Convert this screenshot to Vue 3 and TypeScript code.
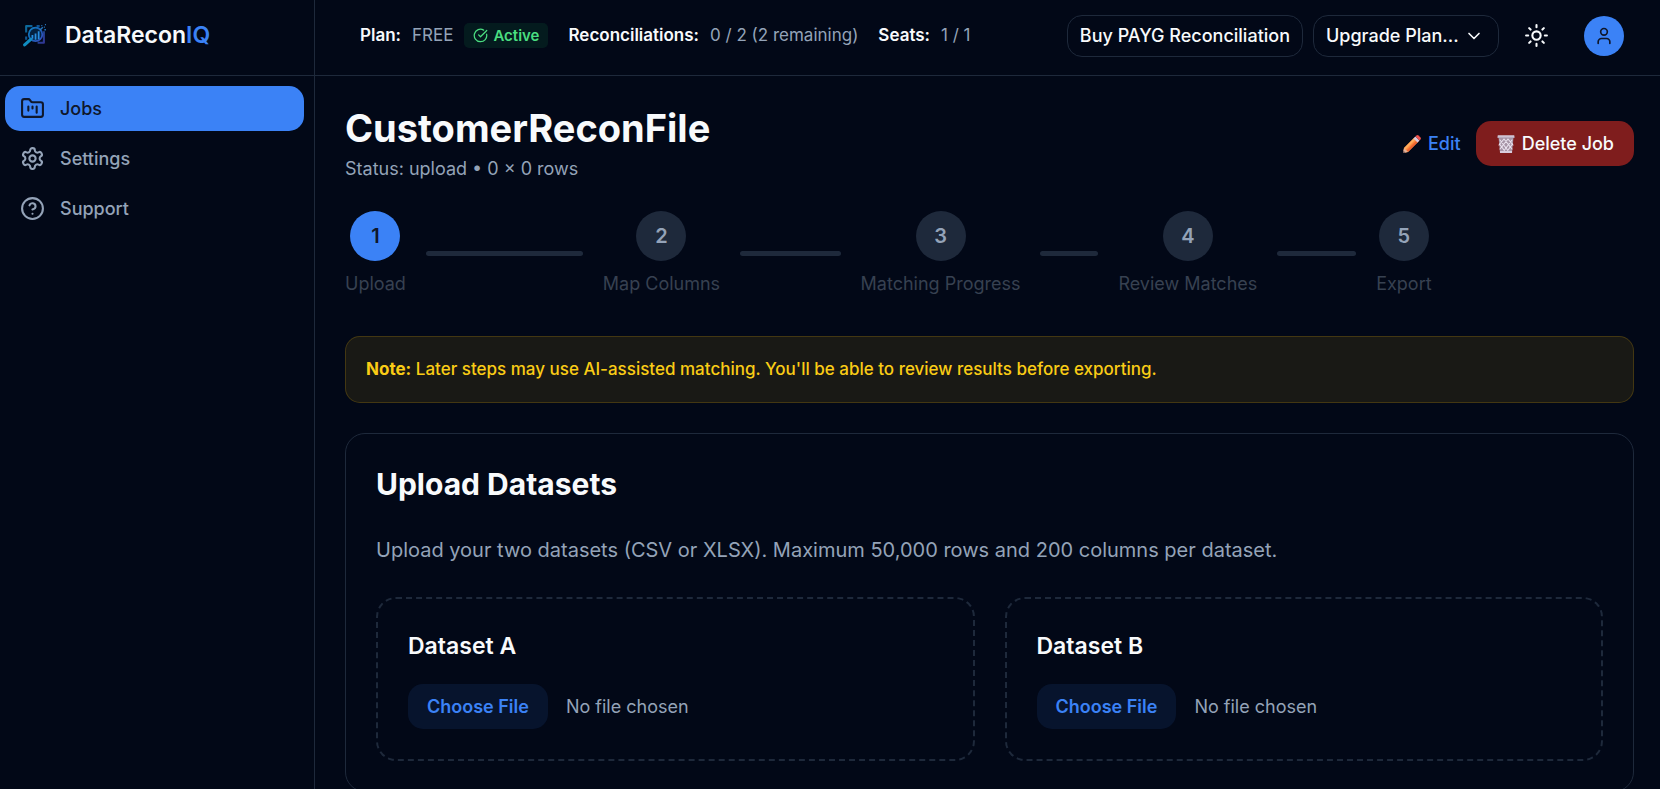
<script setup lang="ts">
import { ref } from 'vue'

interface Step { n: number; label: string }
interface Dataset { id: string; name: string }

const steps: Step[] = [
  { n: 1, label: 'Upload' },
  { n: 2, label: 'Map Columns' },
  { n: 3, label: 'Matching Progress' },
  { n: 4, label: 'Review Matches' },
  { n: 5, label: 'Export' },
]
const current = ref(1)
const plan = ref('')
const datasets: Dataset[] = [
  { id: 'dataset-a', name: 'Dataset A' },
  { id: 'dataset-b', name: 'Dataset B' },
]
</script>

<template>
  <div class="layout">
    <aside class="sidebar">
      <a class="brand" href="#">
        <svg class="logo" viewBox="0 0 24 24" fill="none">
          <defs>
            <linearGradient id="lg" x1="0" y1="0" x2="24" y2="20" gradientUnits="userSpaceOnUse">
              <stop offset="0" stop-color="#0e9fd0" />
              <stop offset="0.5" stop-color="#1565b8" />
              <stop offset="1" stop-color="#4c3fc0" />
            </linearGradient>
          </defs>
          <path d="M4 9V3h6M14 3h3M4 13v3M21 8v11h-6" stroke="url(#lg)" stroke-width="2" opacity="0.75" />
          <circle cx="13" cy="11" r="6.5" fill="#04213f" stroke="url(#lg)" stroke-width="1.7" />
          <path d="M8.400 15.700 2.500 21" stroke="#108cc0" stroke-width="3" stroke-linecap="round" />
          <path d="M10 11.500V15M13 10v6M16 8v7.500" stroke="#288fe0" stroke-width="1.700" />
          <path d="M17 7l3-3M21 4h1M22 1.500h1M18.500 2.500h1M21.500 6.500h1.500" stroke="#2877bd" stroke-width="1.300" />
        </svg>
        <span>DataRecon<span class="accent">IQ</span></span>
      </a>
      <nav class="nav">
        <a class="nav-item active" href="#">
          <svg class="icon" viewBox="0 0 24 24"><path d="M4 20h16a2 2 0 0 0 2-2V8a2 2 0 0 0-2-2h-7.930a2 2 0 0 1-1.660-.9l-.82-1.200A2 2 0 0 0 7.930 3H4a2 2 0 0 0-2 2v13c0 1.100.9 2 2 2ZM8 10v4M12 10v2M16 10v6" /></svg>
          Jobs
        </a>
        <a class="nav-item" href="#">
          <svg class="icon" viewBox="0 0 24 24"><path d="M12.220 2h-.44a2 2 0 0 0-2 2v.18a2 2 0 0 1-1 1.730l-.43.25a2 2 0 0 1-2 0l-.15-.08a2 2 0 0 0-2.730.73l-.22.38a2 2 0 0 0 .73 2.730l.15.1a2 2 0 0 1 1 1.720v.51a2 2 0 0 1-1 1.740l-.15.09a2 2 0 0 0-.73 2.730l.22.38a2 2 0 0 0 2.730.73l.15-.08a2 2 0 0 1 2 0l.43.25a2 2 0 0 1 1 1.730V20a2 2 0 0 0 2 2h.44a2 2 0 0 0 2-2v-.18a2 2 0 0 1 1-1.730l.43-.25a2 2 0 0 1 2 0l.15.08a2 2 0 0 0 2.730-.73l.22-.39a2 2 0 0 0-.73-2.730l-.15-.08a2 2 0 0 1-1-1.740v-.5a2 2 0 0 1 1-1.740l.15-.09a2 2 0 0 0 .73-2.730l-.22-.38a2 2 0 0 0-2.730-.73l-.15.08a2 2 0 0 1-2 0l-.43-.25a2 2 0 0 1-1-1.730V4a2 2 0 0 0-2-2z" /><circle cx="12" cy="12" r="3" /></svg>
          Settings
        </a>
        <a class="nav-item" href="#">
          <svg class="icon" viewBox="0 0 24 24"><circle cx="12" cy="12" r="10" /><path d="M9.090 9a3 3 0 0 1 5.830 1c0 2-3 3-3 3M12 17h.01" /></svg>
          Support
        </a>
      </nav>
    </aside>

    <div class="content">
      <header class="topbar">
        <div class="usage">
          <div class="stat">
            <strong>Plan:</strong><span>FREE</span>
            <span class="badge">
              <svg viewBox="0 0 24 24"><path d="M21.801 10A10 10 0 1 1 17 3.335" /><path d="m9 11 3 3L22 4" /></svg>
              Active
            </span>
          </div>
          <div class="stat"><strong>Reconciliations:</strong><span>0 / 2 (2 remaining)</span></div>
          <div class="stat"><strong>Seats:</strong><span>1 / 1</span></div>
        </div>
        <div class="actions">
          <button class="outline" type="button">Buy PAYG Reconciliation</button>
          <div class="select">
            <select v-model="plan" aria-label="Upgrade plan">
              <option value="">Upgrade Plan...</option>
            </select>
            <svg class="chevron" viewBox="0 0 24 24"><path d="m6 9 6 6 6-6" /></svg>
          </div>
          <button class="theme" type="button" aria-label="Toggle theme">
            <svg class="icon" viewBox="0 0 24 24"><circle cx="12" cy="12" r="4" /><path d="M12 2v2M12 20v2M4.930 4.930l1.410 1.410M17.660 17.660l1.410 1.410M2 12h2M20 12h2M6.340 17.660l-1.410 1.410M19.070 4.930l-1.410 1.410" /></svg>
          </button>
          <button class="avatar" type="button" aria-label="Account">
            <svg viewBox="0 0 24 24"><path d="M19 21v-2a4 4 0 0 0-4-4H9a4 4 0 0 0-4 4v2" /><circle cx="12" cy="7" r="4" /></svg>
          </button>
        </div>
      </header>

      <main class="main">
        <section class="job-head">
          <div>
            <h1>CustomerReconFile</h1>
            <p class="status">Status: upload • 0 × 0 rows</p>
          </div>
          <div class="job-actions">
            <button class="edit" type="button">
              <svg class="emoji" viewBox="0 0 20 20">
                <path d="M2 14 12.500 3.500l4 4L6 18l-5 1z" fill="#ff8a3d" />
                <path d="M2 14 12.500 3.500l1.500 1.500L3.500 15.500z" fill="#ffab5c" />
                <path d="M4.500 16.500 15 6l1.500 1.500L6 18z" fill="#ed6430" />
                <path d="m2 14 4 4-5 1z" fill="#e2b39a" />
                <path d="m1.500 16.800 1.700 1.700L1 19z" fill="#59434c" />
                <path d="m11.500 4.500 2-2 4 4-2 2z" fill="#d8c9df" />
                <path d="m13.500 2.500 1-1a1.500 1.500 0 0 1 2 0l2 2a1.500 1.500 0 0 1 0 2l-1 1z" fill="#f4524d" />
              </svg>
              Edit
            </button>
            <button class="delete" type="button">
              <svg class="emoji" viewBox="0 0 20 20">
                <path d="m2.500 3 1.500 16h12l1.500-16z" fill="#a694a6" />
                <path d="m4 6 9 12M3.500 10l6 8M8 5l8 10M12 5l5 6M16 6 7 18M16.500 10l-6 8M12 5 4 15M8 5l-5 6" stroke="#eae2ee" stroke-width="1.100" fill="none" />
                <path d="M4 17h12v2H4z" fill="#d8cddd" />
                <path d="M1.500 1.500h17V4h-17z" fill="#b9adbf" />
                <path d="M2 1.500h16v1H2z" fill="#e2d9e6" />
              </svg>
              Delete Job
            </button>
          </div>
        </section>

        <ol class="stepper">
          <li v-for="s in steps" :key="s.n" class="step">
            <div class="step-body">
              <span class="dot" :class="{ on: s.n === current }">{{ s.n }}</span>
              <span class="step-label">{{ s.label }}</span>
            </div>
            <span v-if="s.n < steps.length" class="line"></span>
          </li>
        </ol>

        <p class="note"><strong>Note:</strong> Later steps may use AI-assisted matching. You'll be able to review results before exporting.</p>

        <section class="card">
          <h2>Upload Datasets</h2>
          <p class="lead">Upload your two datasets (CSV or XLSX). Maximum 50,000 rows and 200 columns per dataset.</p>
          <div class="datasets">
            <div v-for="d in datasets" :key="d.id" class="dataset">
              <label :for="d.id">{{ d.name }}</label>
              <input :id="d.id" type="file" accept=".csv,.xlsx" />
            </div>
          </div>
        </section>
      </main>
    </div>
  </div>
</template>

<style>
body {
  background: #020817;
}
</style>

<style scoped>
* {
  box-sizing: border-box;
}
.layout {
  display: flex;
  height: 100vh;
  overflow: hidden;
  background: #020817;
  color: #f8fafc;
  font-family: Inter, "Liberation Sans", sans-serif;
  font-size: 18px;
  line-height: 25px;
}
h1, h2, p, ol {
  margin: 0;
  padding: 0;
}
a {
  color: inherit;
  text-decoration: none;
}
button, select, input {
  font: inherit;
  color: inherit;
  margin: 0;
}
button {
  cursor: pointer;
}
strong {
  font-weight: 600;
}
svg {
  flex: none;
  fill: none;
  stroke: currentColor;
  stroke-width: 2;
  stroke-linecap: round;
  stroke-linejoin: round;
}
.icon {
  width: 25px;
  height: 25px;
}
.sidebar {
  flex: none;
  width: 315px;
  border-right: 1px solid #1e293b;
}
.brand {
  display: flex;
  align-items: center;
  gap: 18px;
  height: 76px;
  padding: 0 22px 4px;
  border-bottom: 1px solid #1e293b;
  font-size: 23px;
  font-weight: 600;
}
.logo {
  width: 25px;
  height: 25px;
  stroke: none;
  stroke-linecap: butt;
}
.accent {
  color: #3b82f6;
}
.nav {
  display: flex;
  flex-direction: column;
  gap: 5px;
  padding: 10px 10px 10px 5px;
}
.nav-item {
  display: flex;
  align-items: center;
  gap: 15px;
  padding: 10px 15px;
  border-radius: 15px;
  color: #94a3b8;
  font-weight: 500;
}
.nav-item.active {
  background: #3b82f6;
  color: #0f172a;
}
.content {
  flex: 1;
  min-width: 0;
  display: flex;
  flex-direction: column;
}
.topbar {
  flex: none;
  display: flex;
  align-items: center;
  justify-content: space-between;
  height: 76px;
  padding: 0 36px 4px 45px;
  border-bottom: 1px solid #1e293b;
}
.usage {
  display: flex;
  gap: 20px;
  color: #94a3b8;
  font-size: 17px;
  white-space: nowrap;
}
.stat {
  display: flex;
  align-items: center;
  gap: 11px;
}
.stat strong {
  color: #f8fafc;
}
.badge {
  display: flex;
  align-items: center;
  gap: 5px;
  padding: 0 9px;
  border-radius: 5px;
  background: rgba(34, 197, 94, 0.1);
  color: #4ade80;
  font-size: 15px;
  font-weight: 600;
}
.badge svg {
  width: 15px;
  height: 15px;
}
.actions {
  display: flex;
  align-items: center;
  gap: 10px;
  font-weight: 500;
}
.outline, .select select {
  height: 42px;
  padding: 0 12px;
  border: 1px solid #1e293b;
  border-radius: 15px;
  background: transparent;
  white-space: nowrap;
}
.select {
  display: grid;
  align-items: center;
}
.select > * {
  grid-area: 1 / 1;
}
.select select {
  appearance: none;
  padding-right: 39px;
}
.chevron {
  width: 20px;
  height: 20px;
  margin-right: 15px;
  justify-self: end;
  pointer-events: none;
}
.theme, .avatar {
  display: grid;
  place-items: center;
  padding: 0;
  border: 0;
  background: transparent;
}
.theme {
  width: 55px;
  height: 45px;
}
.avatar {
  width: 40px;
  height: 40px;
  margin-left: 10px;
  border-radius: 50%;
  background: #3b82f6;
  color: #0f172a;
}
.avatar svg {
  width: 20px;
  height: 20px;
}
.main {
  flex: 1;
  min-height: 0;
  padding: 30px 26px 30px 30px;
  overflow-y: auto;
  scrollbar-width: none;
}
.job-head {
  display: flex;
  align-items: center;
  justify-content: space-between;
}
h1 {
  font-size: 38px;
  line-height: 45px;
  font-weight: 700;
}
.status {
  margin-top: 5px;
  color: #94a3b8;
}
.job-actions {
  display: flex;
  align-items: center;
  gap: 15px;
}
.edit, .delete {
  display: flex;
  align-items: center;
  gap: 6px;
  padding: 10px 0;
  border: 0;
  background: transparent;
  font-weight: 500;
}
.edit {
  color: #3b82f6;
}
.delete {
  padding: 10px 20px;
  border-radius: 15px;
  background: #7f1d1d;
}
.emoji {
  width: 20px;
  height: 20px;
  stroke: none;
}
.stepper {
  display: flex;
  margin: 30px 0 40px;
  list-style: none;
}
.step {
  flex: 1;
  display: flex;
  align-items: center;
}
.step-body {
  display: flex;
  flex-direction: column;
  align-items: center;
  gap: 10px;
}
.dot {
  display: grid;
  place-items: center;
  width: 50px;
  height: 50px;
  border-radius: 50%;
  background: #1e293b;
  color: #94a3b8;
  font-size: 20px;
  font-weight: 600;
}
.dot.on {
  background: #3b82f6;
  color: #0f172a;
}
.step-label {
  color: #374151;
  white-space: nowrap;
}
.line {
  flex: 1;
  height: 5px;
  margin: 0 20px;
  border-radius: 3px;
  background: #1e293b;
}
.note {
  padding: 20px;
  border: 1px solid rgba(234, 179, 8, 0.2);
  border-radius: 15px;
  background: rgba(234, 179, 8, 0.1);
  color: #facc15;
  font-size: 17px;
  font-weight: 500;
}
.note strong {
  font-weight: 700;
}
.card {
  margin-top: 30px;
  padding: 30px;
  border: 1px solid #1e293b;
  border-radius: 20px;
}
h2 {
  font-size: 30px;
  line-height: 40px;
  font-weight: 700;
}
.lead {
  margin: 30px 0;
  color: #94a3b8;
  font-size: 20px;
  line-height: 33px;
}
.datasets {
  display: grid;
  grid-template-columns: 1fr 1fr;
  gap: 30px;
}
.dataset {
  display: flex;
  flex-direction: column;
  gap: 20px;
  padding: 30px;
  border: 2px dashed #1e293b;
  border-radius: 20px;
}
.dataset label {
  font-size: 23px;
  line-height: 35px;
  font-weight: 600;
}
.dataset input {
  width: 100%;
  color: #94a3b8;
}
.dataset input::file-selector-button {
  height: 45px;
  margin: 0 18px 0 0;
  padding: 0 19px;
  border: 0;
  border-radius: 15px;
  background: rgba(59, 130, 246, 0.1);
  color: #3b82f6;
  font: inherit;
  font-weight: 600;
}
</style>
